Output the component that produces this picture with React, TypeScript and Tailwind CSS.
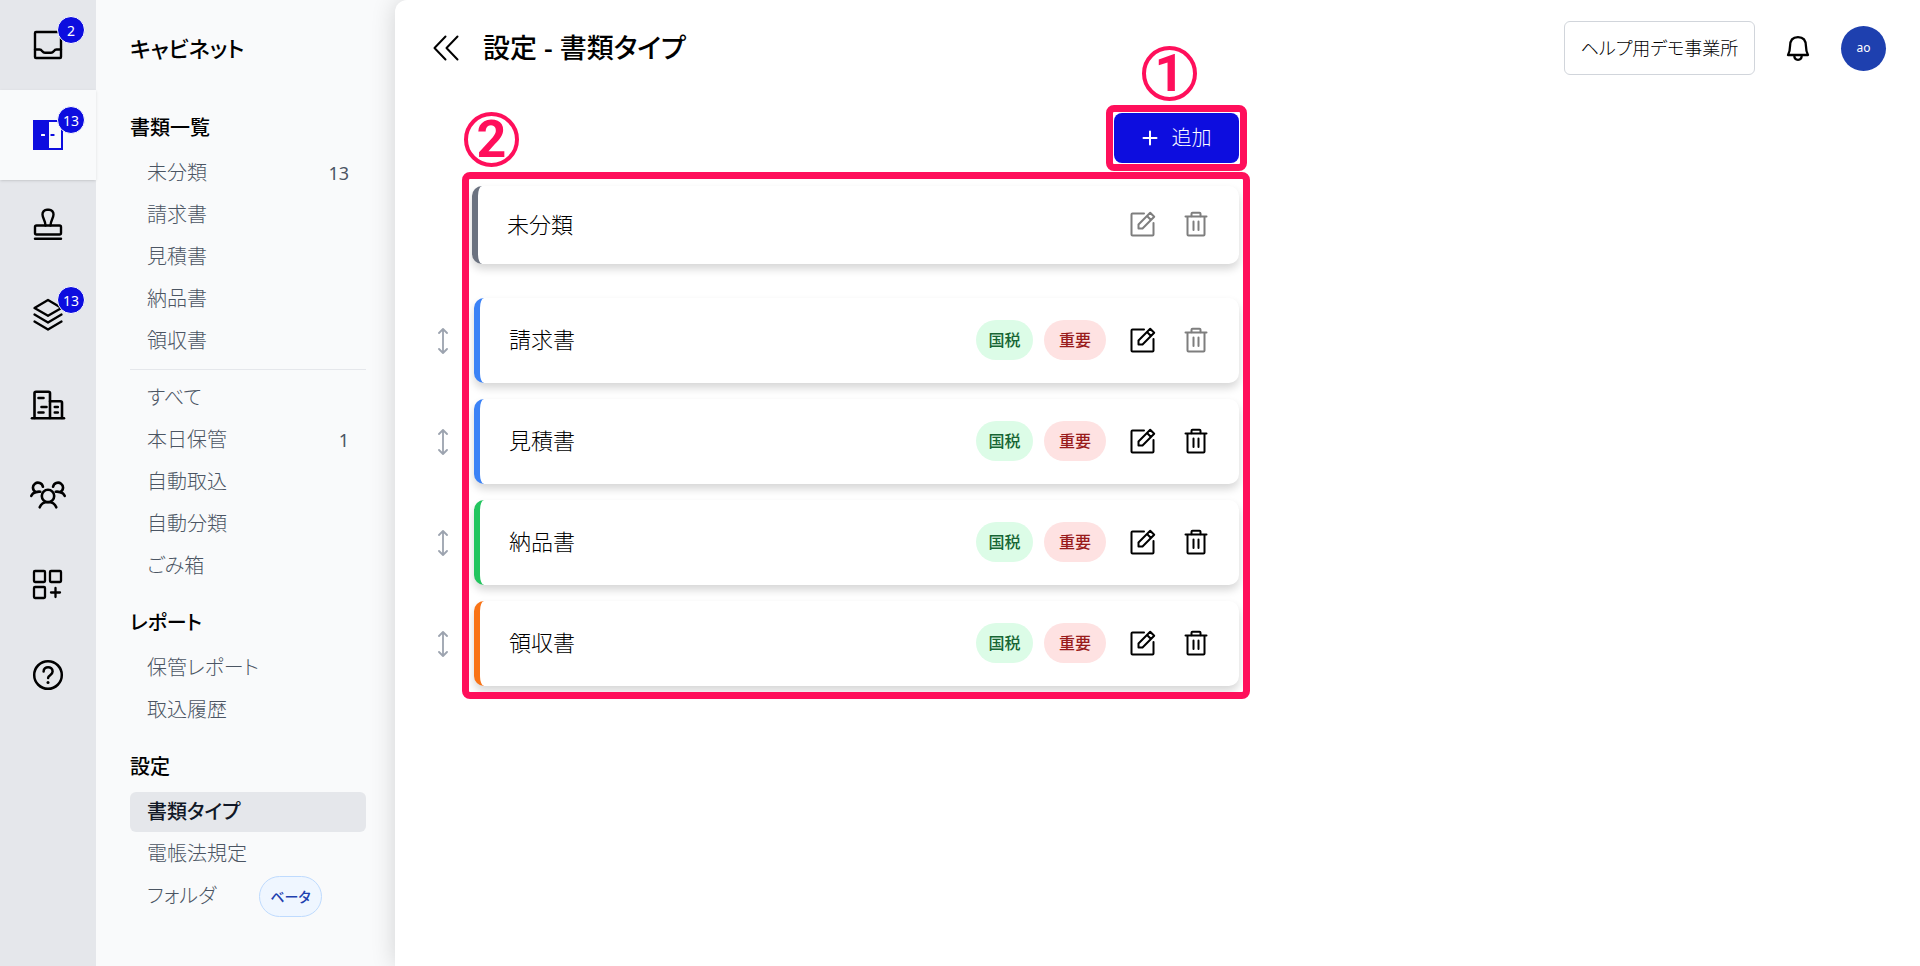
import React from 'react';

interface IconProps {
  className?: string;
}

interface RailItem {
  label: string;
  icon: React.FC<IconProps>;
  badge?: number;
  active?: boolean;
}

interface MenuItem {
  label: string;
  count?: number;
  active?: boolean;
  beta?: boolean;
}

interface DocumentType {
  name: string;
  border: string;
  fixed?: boolean;
  canEdit: boolean;
  canDelete: boolean;
}

const stroke = {
  fill: 'none',
  stroke: 'currentColor',
  strokeWidth: 2,
  strokeLinecap: 'round',
  strokeLinejoin: 'round',
} as const;

const InboxIcon: React.FC<IconProps> = ({ className }) => (
  <svg viewBox="0 0 36 36" className={className} {...stroke} strokeWidth="2.4">
    <rect x="5" y="5" width="26" height="26" rx="1" />
    <path d="M5 22.5h4.500c1.500 0 2 .6 2.800 1.800.8 1 1.500 1.400 2.700 1.400h6c1.200 0 1.900-.4 2.700-1.400.8-1.200 1.300-1.800 2.800-1.800H31" />
  </svg>
);

const CabinetIcon: React.FC<IconProps> = ({ className }) => (
  <svg viewBox="0 0 36 36" className={className} fill="none">
    <path d="M3 3h16v30H3z" fill="currentColor" />
    <path d="M18 4h14v28H18" stroke="currentColor" strokeWidth="2" />
    <rect x="11" y="17" width="4" height="2" rx=".5" fill="#fff" />
    <rect x="20.5" y="17" width="4" height="2" rx=".5" fill="currentColor" />
  </svg>
);

const StampIcon: React.FC<IconProps> = ({ className }) => (
  <svg viewBox="0 0 36 36" className={className} {...stroke} strokeWidth="2.4">
    <path d="M15.500 18.500c0-4.500-3-7.500-3-11A4.500 4.500 0 0 1 17 2.700h2a4.500 4.500 0 0 1 4.500 4.800c0 3.500-3 6.500-3 11" />
    <rect x="5" y="18.500" width="26" height="9" rx="1.500" />
    <path d="M5 31.700h26" />
  </svg>
);

const LayersIcon: React.FC<IconProps> = ({ className }) => (
  <svg viewBox="0 0 36 36" className={className} {...stroke} strokeWidth="2.3">
    <path d="M18 3 31.500 11 18 18.800 4.500 11Z" />
    <path d="M4.500 17.500 18 25.500l13.500-8" />
    <path d="M4.500 24.500 18 32.500l13.500-8" />
  </svg>
);

const BuildingIcon: React.FC<IconProps> = ({ className }) => (
  <svg viewBox="0 0 36 36" className={className} {...stroke} strokeWidth="2.6">
    <path d="M4.500 31V6.200a1.500 1.500 0 0 1 1.500-1.500h12.500a1.500 1.500 0 0 1 1.500 1.500V31" />
    <path d="M20 14.200h10.500a1.500 1.500 0 0 1 1.500 1.500V31" />
    <path d="M2 31.300h32" />
    <path d="M8.500 11h5M11.500 20h5M8.500 25.500h5M24.800 20h3M24.800 25.500h3" />
  </svg>
);

const PeopleIcon: React.FC<IconProps> = ({ className }) => (
  <svg viewBox="0 0 36 36" className={className} {...stroke} strokeWidth="2.600">
    <circle cx="18" cy="19" r="6.200" />
    <path d="M9.700 30.300c1.300-3.300 4-5.300 8.300-5.300s7 2 8.300 5.300" />
    <path d="M12.900 9.800a5 5 0 1 0-7 5.400c-2.500.5-3.900 1.700-4.600 3.700M5.900 15.200c1.600-.6 2.900-.7 4.300-.5" />
    <path d="M23.100 9.800a5 5 0 1 1 7 5.400c2.500.5 3.900 1.700 4.600 3.700M30.100 15.200c-1.600-.6-2.900-.7-4.300-.5" />
  </svg>
);

const AppsIcon: React.FC<IconProps> = ({ className }) => (
  <svg viewBox="0 0 36 36" className={className} {...stroke} strokeWidth="2.300">
    <rect x="4" y="4" width="11" height="11" rx="1" />
    <rect x="20" y="4" width="11" height="11" rx="1" />
    <rect x="4" y="20" width="11" height="11" rx="1" />
    <path d="M25.500 21v9M21 25.500h9" />
  </svg>
);

const HelpIcon: React.FC<IconProps> = ({ className }) => (
  <svg viewBox="0 0 36 36" className={className} {...stroke} strokeWidth="2.500">
    <circle cx="18" cy="18" r="13.800" />
    <path d="M13.600 14.500c0-5.800 9-5.800 9 0 0 3.800-4.500 3.500-4.500 6.500" />
    <path d="M18 25.500v.1" strokeWidth="3" />
  </svg>
);

const BellIcon: React.FC<IconProps> = ({ className }) => (
  <svg viewBox="0 0 24 28" className={className} {...stroke} strokeWidth="2.300">
    <path d="M2 21h20c-1.400-2.500-2-5-2-8.500C20 6 17 3.200 12 3.200S4 6 4 12.500C4 16 3.400 18.500 2 21Z" />
    <path d="M8.300 21.500c0 2.800 1.700 4.300 3.700 4.300s3.700-1.500 3.700-4.300" />
  </svg>
);

const BackIcon: React.FC<IconProps> = ({ className }) => (
  <svg viewBox="0 0 26 26" className={className} {...stroke}>
    <path d="M12.500 1.500 1.500 13l11 11.500M24.500 1.500 13.500 13l11 11.500" />
  </svg>
);

const PlusIcon: React.FC<IconProps> = ({ className }) => (
  <svg viewBox="0 0 16 16" className={className} {...stroke}>
    <path d="M8 1.500v13M1.500 8h13" />
  </svg>
);

const MoveIcon: React.FC<IconProps> = ({ className }) => (
  <svg viewBox="0 0 12 26" className={className} {...stroke} strokeWidth="1.800">
    <path d="M6 1.500v23M2 5l4-4 4 4M2 21l4 4 4-4" />
  </svg>
);

const EditIcon: React.FC<IconProps> = ({ className }) => (
  <svg viewBox="0 0 26 26" className={className} {...stroke}>
    <path d="M14 2.500H2.500a1 1 0 0 0-1 1v20a1 1 0 0 0 1 1h20a1 1 0 0 0 1-1V12" />
    <path d="M8.500 17.500v-4L20.200 1.800l4 4L12.500 17.500ZM17 5l4 4" />
  </svg>
);

const TrashIcon: React.FC<IconProps> = ({ className }) => (
  <svg viewBox="0 0 24 26" className={className} {...stroke}>
    <path d="M1.500 5.500h21M3.500 5.500v18a1 1 0 0 0 1 1h15a1 1 0 0 0 1-1v-18" />
    <path d="M7.500 5.200V2.700a1 1 0 0 1 1-1h7a1 1 0 0 1 1 1v2.500M9.500 10.500v8.500M14.500 10.500v8.500" />
  </svg>
);

const railItems: RailItem[] = [
  { label: '受信箱', icon: InboxIcon, badge: 2 },
  { label: 'キャビネット', icon: CabinetIcon, badge: 13, active: true },
  { label: '承認', icon: StampIcon },
  { label: '一括処理', icon: LayersIcon, badge: 13 },
  { label: '取引先', icon: BuildingIcon },
  { label: 'メンバー', icon: PeopleIcon },
  { label: 'アプリ', icon: AppsIcon },
  { label: 'ヘルプ', icon: HelpIcon },
];

const documentMenu: MenuItem[] = [
  { label: '未分類', count: 13 },
  { label: '請求書' },
  { label: '見積書' },
  { label: '納品書' },
  { label: '領収書' },
];

const storageMenu: MenuItem[] = [
  { label: 'すべて' },
  { label: '本日保管', count: 1 },
  { label: '自動取込' },
  { label: '自動分類' },
  { label: 'ごみ箱' },
];

const reportMenu: MenuItem[] = [{ label: '保管レポート' }, { label: '取込履歴' }];

const settingsMenu: MenuItem[] = [
  { label: '書類タイプ', active: true },
  { label: '電帳法規定' },
  { label: 'フォルダ', beta: true },
];

const documentTypes: DocumentType[] = [
  { name: '未分類', border: 'border-l-[#6b7280]', fixed: true, canEdit: false, canDelete: false },
  { name: '請求書', border: 'border-l-[#3b82f6]', canEdit: true, canDelete: false },
  { name: '見積書', border: 'border-l-[#3b82f6]', canEdit: true, canDelete: true },
  { name: '納品書', border: 'border-l-[#22c55e]', canEdit: true, canDelete: true },
  { name: '領収書', border: 'border-l-[#f97316]', canEdit: true, canDelete: true },
];

const Rail = () => (
  <nav className="w-24 shrink-0 bg-[#e5e7eb]">
    {railItems.map(({ label, icon: Icon, badge, active }) => (
      <a
        key={label}
        href="#"
        aria-label={label}
        className={`relative flex h-[90px] items-center justify-center ${active ? 'bg-[#f9fafb] text-[#0d0ddf] shadow-sm' : 'text-black'}`}
      >
        <Icon className="size-9" />
        {badge !== undefined && (
          <span className="absolute top-4 left-[57px] flex size-7 items-center justify-center rounded-full border border-white bg-[#0d0ddf] text-[14px] text-white">
            {badge}
          </span>
        )}
      </a>
    ))}
  </nav>
);

const MenuList = ({ items }: { items: MenuItem[] }) => (
  <ul className="flex flex-col gap-0.5">
    {items.map((item) => (
      <li key={item.label}>
        <a
          href="#"
          className={`flex h-10 items-center rounded-md px-[17px] text-[20px] ${
            item.active ? 'bg-[#e5e7eb] font-medium text-[#111827]' : 'font-light text-[#4b5563]'
          }`}
        >
          {item.label}
          {item.count !== undefined && <span className="ml-auto text-[18px] font-normal">{item.count}</span>}
          {item.beta && (
            <span className="mr-[27px] ml-auto flex h-[41px] w-[63px] shrink-0 items-center justify-center rounded-full border border-[#bfdbfe] bg-[#eff6ff] text-[14px] font-medium text-[#1e40af]">
              ベータ
            </span>
          )}
        </a>
      </li>
    ))}
  </ul>
);

const MenuHeading = ({ children }: { children: string }) => (
  <h2 className="mb-[3px] flex h-11 items-center text-[20px] font-medium">{children}</h2>
);

const Sidebar = () => (
  <aside className="w-[299px] shrink-0 bg-[#f9fafb] pr-[29px] pl-[34px]">
    <p className="flex h-24 items-center text-[22px] font-medium">キャビネット</p>
    <section className="mt-[10px]">
      <MenuHeading>書類一覧</MenuHeading>
      <MenuList items={documentMenu} />
      <hr className="my-2 border-[#e5e7eb]" />
      <MenuList items={storageMenu} />
    </section>
    <section className="mt-[15px]">
      <MenuHeading>レポート</MenuHeading>
      <MenuList items={reportMenu} />
    </section>
    <section className="mt-[15px]">
      <MenuHeading>設定</MenuHeading>
      <MenuList items={settingsMenu} />
    </section>
  </aside>
);

const Header = () => (
  <header className="flex h-24 items-center pr-[34px] pl-[38px]">
    <button type="button" aria-label="戻る">
      <BackIcon className="size-[26px]" />
    </button>
    <h1 className="ml-6 text-[27px] font-medium">設定 - 書類タイプ</h1>
    <button
      type="button"
      className="ml-auto h-[54px] w-[191px] rounded-md border border-[#d1d5db] text-[18px] font-light"
    >
      ヘルプ用デモ事業所
    </button>
    <button type="button" aria-label="通知" className="ml-[31px]">
      <BellIcon className="h-7 w-6" />
    </button>
    <button
      type="button"
      className="ml-[31px] flex size-[45px] items-center justify-center rounded-full bg-[#1e40af] text-[12px] text-white"
    >
      ao
    </button>
  </header>
);

// Numbered callout used on the help pages
const Marker = ({ value, className }: { value: number; className: string }) => (
  <span
    className={`absolute flex size-[55px] items-center justify-center rounded-full border-4 border-[#ff0f5b] font-[Roboto,sans-serif] text-[52px] leading-none font-bold text-[#ff0f5b] ${className}`}
  >
    {value}
  </span>
);

const DocumentTypeRow = ({ type }: { type: DocumentType }) => (
  <li className={`flex items-center ${type.fixed ? 'mb-[18px] pl-[39px]' : ''}`}>
    {!type.fixed && (
      <button type="button" aria-label={`${type.name}を並べ替え`} className="mr-[25px] ml-1 text-[#9ca3af]">
        <MoveIcon className="h-[26px] w-3" />
      </button>
    )}
    <div
      className={`flex flex-1 items-center rounded-[10px] border-l-[6px] bg-white pr-[31px] pb-0.5 pl-[29px] shadow-[0_5px_8px_rgba(0,0,0,0.16)] ${type.border} ${type.fixed ? 'h-[78px]' : 'h-[85px]'}`}
    >
      <span className="text-[22px] font-light">{type.name}</span>
      <div className="ml-auto flex items-center">
        {!type.fixed && (
          <>
            <span className="mr-[11px] flex h-10 w-[57px] items-center justify-center rounded-full bg-[#dcfce7] text-[16px] font-medium text-[#166534]">
              国税
            </span>
            <span className="mr-6 flex h-10 w-[62px] items-center justify-center rounded-full bg-[#fee2e2] text-[16px] font-medium text-[#991b1b]">
              重要
            </span>
          </>
        )}
        <button type="button" aria-label={`${type.name}を編集`} disabled={!type.canEdit} className="disabled:opacity-50">
          <EditIcon className="size-[26px]" />
        </button>
        <button
          type="button"
          aria-label={`${type.name}を削除`}
          disabled={!type.canDelete}
          className="ml-7 disabled:opacity-50"
        >
          <TrashIcon className="h-[26px] w-6" />
        </button>
      </div>
    </div>
  </li>
);

const App: React.FC = () => (
  <div className="flex min-h-screen bg-[#f9fafb] font-['Noto_Sans','Noto_Sans_CJK_JP',sans-serif] text-black [font-feature-settings:'palt']">
    <Rail />
    <Sidebar />
    <main className="min-w-0 flex-1 rounded-tl-xl bg-white shadow-[0_0_24px_rgba(0,0,0,0.16)]">
      <Header />
      <div className="max-w-[844px] pt-[17px] pl-[38px]">
        <div className="flex justify-end">
          <div className="relative">
            <button
              type="button"
              className="flex h-[50px] w-[125px] items-center justify-center gap-3.5 rounded-lg bg-[#0d0ddf] text-[20px] font-light text-white"
            >
              <PlusIcon className="size-4" />
              追加
            </button>
            <span className="pointer-events-none absolute -inset-2 rounded-lg border-[7px] border-[#ff0f5b]" />
            <Marker value={1} className="-top-[67px] left-7" />
          </div>
        </div>
        <div className="relative mt-[23px]">
          <ul className="flex flex-col gap-4">
            {documentTypes.map((type) => (
              <DocumentTypeRow key={type.name} type={type} />
            ))}
          </ul>
          <span className="pointer-events-none absolute -top-[14px] -right-[11px] -bottom-[13px] left-[29px] rounded-lg border-[7px] border-[#ff0f5b]" />
          <Marker value={2} className="-top-[74px] left-[31px]" />
        </div>
      </div>
    </main>
  </div>
);

export default App;
